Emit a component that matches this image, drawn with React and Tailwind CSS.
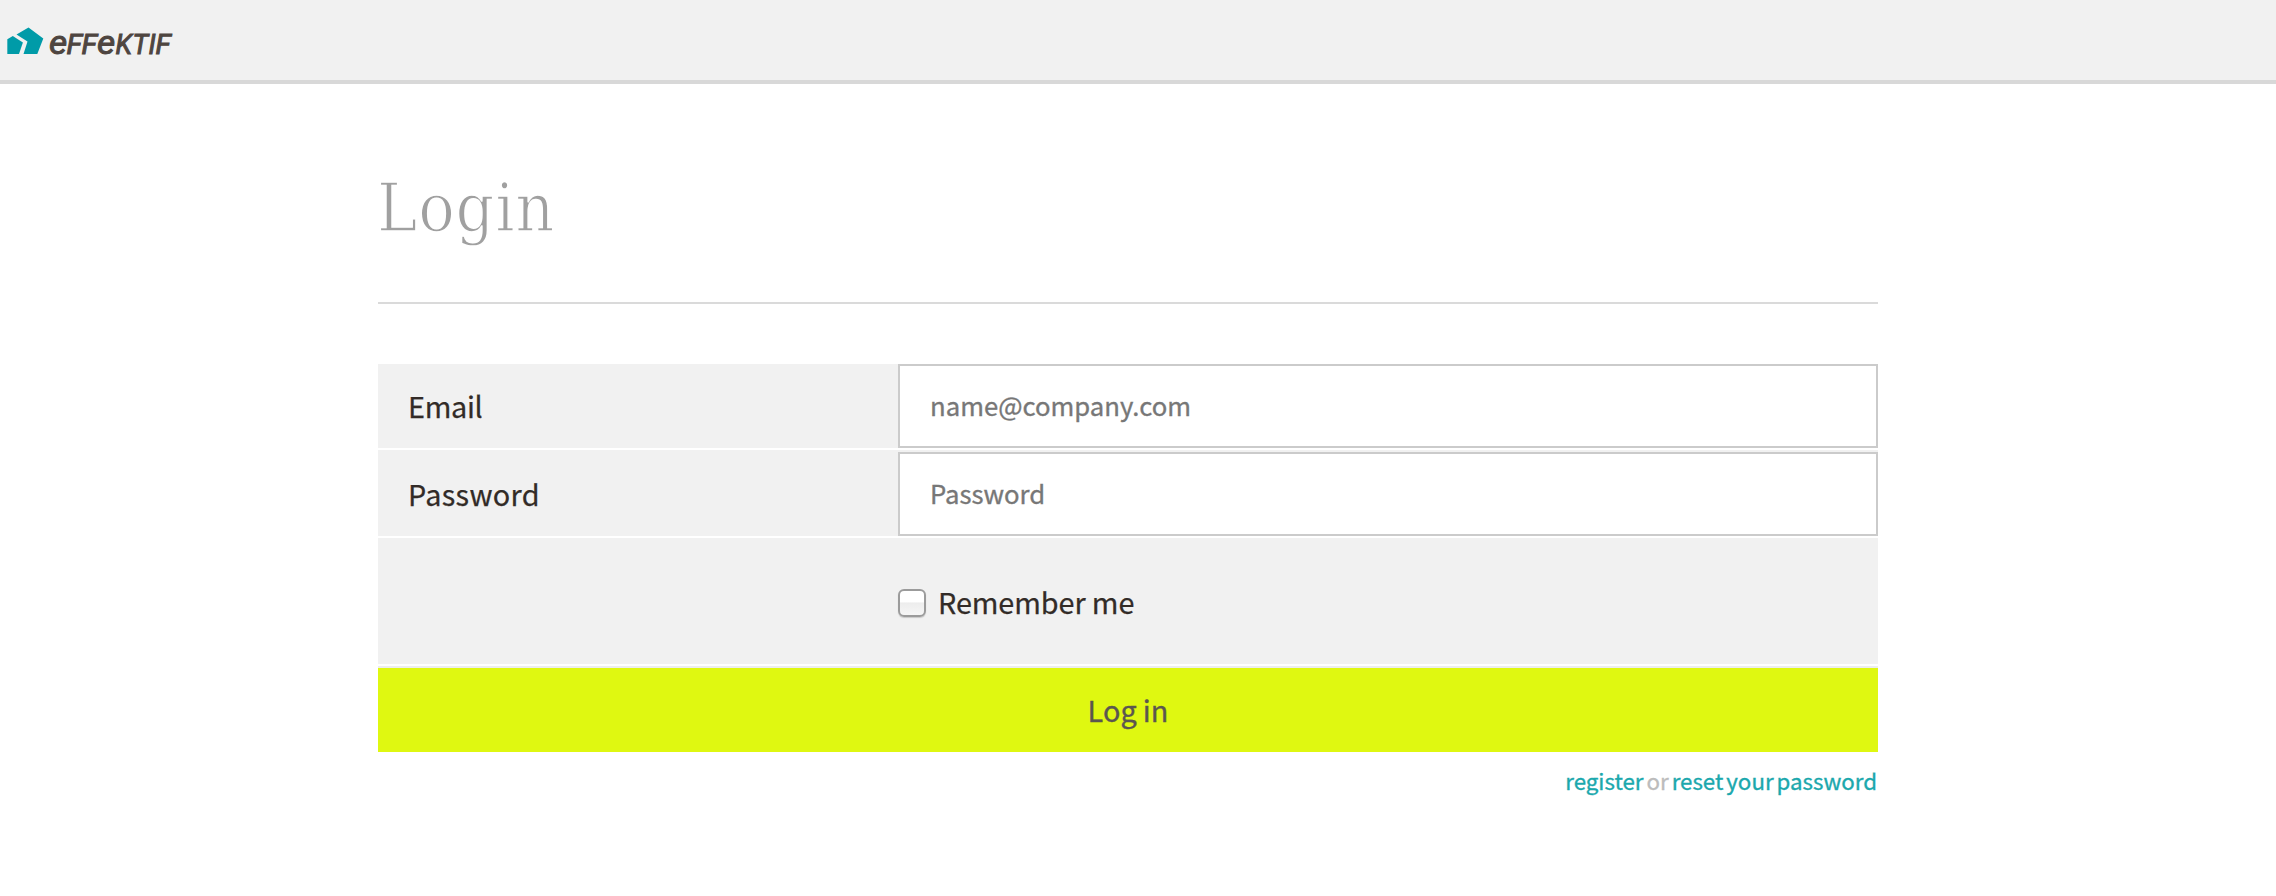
const inputClass =
  "block h-[84px] w-[980px] border-2 border-[#cbcbcb] bg-white pl-[30px] pb-[3px] text-[25.7px] text-[#777] placeholder-[#777] outline-none [-webkit-text-stroke:0.35px_#777]";

function Logo() {
  return (
    <svg className="ml-[7px] block" width="180" height="60" viewBox="7 12 180 60" role="img" aria-label="effektif">
      <path d="M16.5 34.6 28.5 27.5 43.3 38.5 37.3 54H23.5L27.5 41.5Z" fill="#009ba8" />
      <path d="M7.3 39.3 12.8 36 22.9 42.4 19 54H7.3Z" fill="#009ba8" />
      <g fill="#4e4540" stroke="#4e4540" strokeWidth="1" fontFamily="Roboto, sans-serif" fontStyle="italic" fontSize="27">
        <text transform="translate(49 53.5) scale(1.04 1)" fontSize="34">e</text>
        <text transform="translate(66.5 53.5) scale(1.07 1)">F</text>
        <text transform="translate(81.5 53.5) scale(1.07 1)">F</text>
        <text transform="translate(97 53.5) scale(1.04 1)" fontSize="34">e</text>
        <text transform="translate(115.5 53.5)">K</text>
        <text transform="translate(132.5 53.5)">T</text>
        <text transform="translate(148.5 53.5)">I</text>
        <text transform="translate(155.5 53.5) scale(1.05 1)">F</text>
      </g>
    </svg>
  );
}

export default function App() {
  return (
    <div className="min-h-[896px] bg-white font-['Noto_Sans_CJK_SC',sans-serif] text-[#322b27]">
      <header className="flex h-[84px] items-center border-b-4 border-[#d8d8d8] bg-[#f1f1f1] pt-[4px]">
        <Logo />
      </header>
      <main className="ml-[378px] w-[1500px]">
        <h1 className="h-[220px] border-b-2 border-[#dadada] pt-[76px] font-['DejaVu_Serif_Condensed','DejaVu_Serif',serif] text-[67.5px] leading-[96px] font-normal tracking-[0.8px] [font-stretch:condensed] text-[#a0a0a0] [-webkit-text-stroke:1.4px_white]">
          <span className="-ml-[1px]">Login</span>
        </h1>
        <form className="mt-[60px] [-webkit-text-stroke:0.25px_currentColor]" onSubmit={(e) => e.preventDefault()}>
          <div className="flex h-[84px] items-center justify-between bg-[#f1f1f1]">
            <label htmlFor="email" className="pl-[30px] text-[28.8px] tracking-[-0.3px]">Email</label>
            <input id="email" type="email" placeholder="name@company.com" className={inputClass} />
          </div>
          <div className="mt-[2px] flex h-[86px] items-center justify-between bg-[#f1f1f1] pt-[2px]">
            <label htmlFor="password" className="pl-[30px] text-[28.8px] tracking-[0.35px]">Password</label>
            <input id="password" type="password" placeholder="Password" className={inputClass} />
          </div>
          <div className="mt-[2px] flex h-[126px] items-center bg-[#f1f1f1] pt-[2px] pl-[520px]">
            <label className="flex items-center gap-[12px] text-[28.8px] tracking-[-0.08px]">
              <input
                type="checkbox"
                className="mt-[1px] size-[28px] appearance-none rounded-[6px] border-2 border-[#9b9b9b] bg-linear-to-b from-white from-45% via-[#ededed] via-50% to-[#f6f6f6] shadow-[0_1px_1px_#c8c8c8]"
              />
              Remember me
            </label>
          </div>
          <div className="mt-[2px] bg-[#ededed] pt-[2px]">
            <button className="block h-[84px] w-full bg-[#dff811] text-[28.8px] tracking-[0.2px] text-[#5b5650] [-webkit-text-stroke:0.35px_#5b5650] [word-spacing:-1px]">Log in</button>
          </div>
        </form>
        <p className="mt-[12px] pr-[1px] text-right text-[22.3px] leading-[32px] text-[#bcbcbc] [word-spacing:-2px] [-webkit-text-stroke:0.35px_#bcbcbc]">
          <a className="text-[#1ba8ad] [-webkit-text-stroke:0.35px_#1ba8ad]">register</a> or <a className="text-[#1ba8ad] [-webkit-text-stroke:0.35px_#1ba8ad]">reset your password</a>
        </p>
      </main>
    </div>
  );
}
